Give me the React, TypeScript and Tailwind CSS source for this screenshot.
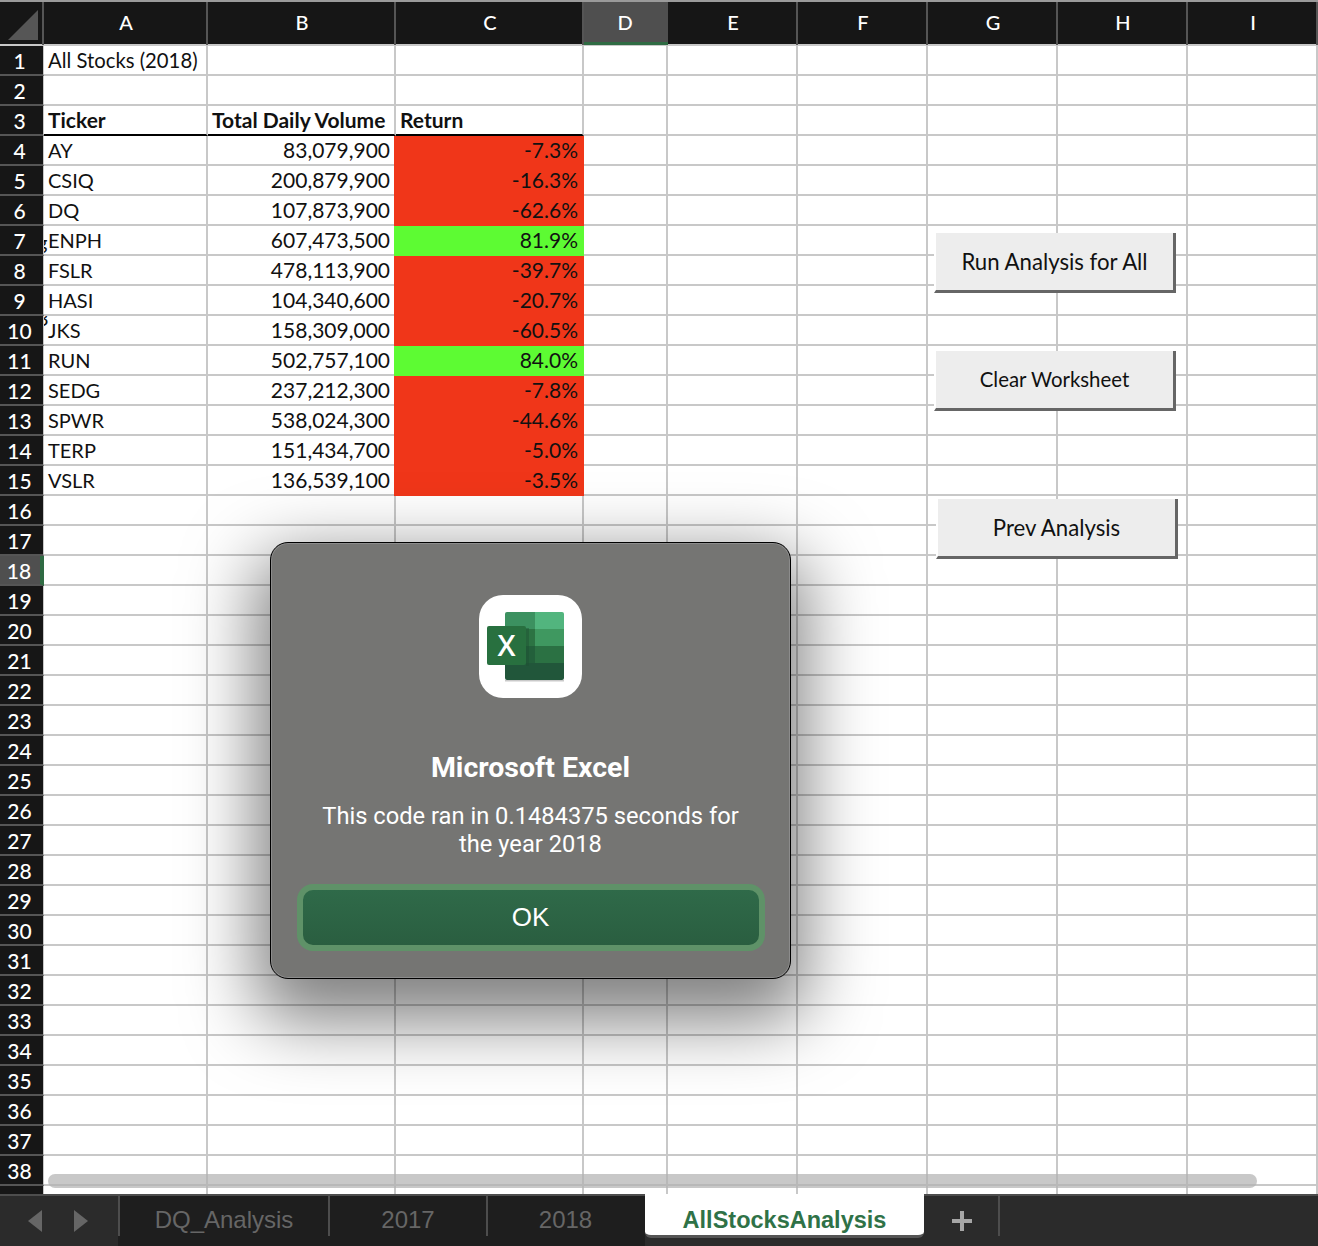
import React from 'react';

const columns = ['A', 'B', 'C', 'D', 'E', 'F', 'G', 'H', 'I'];

const stocks = [
  { ticker: 'AY', volume: '83,079,900', ret: '-7.3%' },
  { ticker: 'CSIQ', volume: '200,879,900', ret: '-16.3%' },
  { ticker: 'DQ', volume: '107,873,900', ret: '-62.6%' },
  { ticker: 'ENPH', volume: '607,473,500', ret: '81.9%', spill: 'g' },
  { ticker: 'FSLR', volume: '478,113,900', ret: '-39.7%' },
  { ticker: 'HASI', volume: '104,340,600', ret: '-20.7%' },
  { ticker: 'JKS', volume: '158,309,000', ret: '-60.5%', spill: '3' },
  { ticker: 'RUN', volume: '502,757,100', ret: '84.0%' },
  { ticker: 'SEDG', volume: '237,212,300', ret: '-7.8%' },
  { ticker: 'SPWR', volume: '538,024,300', ret: '-44.6%' },
  { ticker: 'TERP', volume: '151,434,700', ret: '-5.0%' },
  { ticker: 'VSLR', volume: '136,539,100', ret: '-3.5%' },
];

const gridCols = 'grid grid-cols-[44px_164px_188px_188px_84px_130px_130px_130px_130px_130px]';
const cellLine = 'border-r-2 border-b-2 border-[#c8c8c8] h-[30px] min-w-0 leading-[28px] whitespace-nowrap';

const Cell = ({ className = '', children }: { className?: string; children?: React.ReactNode }) => (
  <div className={`${cellLine} ${className}`}>{children}</div>
);

const RowHeader = ({ n }: { n: number }) => (
  <div
    className={
      n === 18
        ? 'h-[30px] bg-[#4f4f4f] border-r-4 border-r-[#2f6b43] border-b-2 border-b-[#555555] text-center pr-[2px] text-white text-[21px] font-medium leading-[29px]'
        : 'h-[30px] bg-[#161616] border-r border-r-[#c8c8c8] border-b-2 border-b-[#555555] text-center pr-[4px] text-white text-[21px] font-medium leading-[29px]'
    }
  >
    {n}
  </div>
);

const EmptyCells = ({ count }: { count: number }) => (
  <>
    {Array.from({ length: count }).map((_, i) => (
      <Cell key={i} />
    ))}
  </>
);

const SheetRow = ({ n }: { n: number }) => {
  let cells: React.ReactNode = <EmptyCells count={9} />;

  if (n === 1) {
    cells = (
      <>
        <Cell className="pl-1 text-[20.3px]">All Stocks (2018)</Cell>
        <EmptyCells count={8} />
      </>
    );
  } else if (n === 3) {
    cells = (
      <>
        <Cell className="pl-1 font-bold border-b-black">Ticker</Cell>
        <Cell className="pl-1 font-bold border-b-black">Total Daily Volume</Cell>
        <Cell className="pl-1 font-bold border-b-black">Return</Cell>
        <EmptyCells count={6} />
      </>
    );
  } else if (n >= 4 && n <= 15) {
    const s = stocks[n - 4];
    const up = !s.ret.startsWith('-');
    cells = (
      <>
        <Cell className="relative overflow-hidden pl-1 text-[20px]">
          {s.spill && (
            <span className={s.spill === 'g' ? 'absolute -left-[7px] top-[2px]' : 'absolute -left-[7px] -top-[12px]'}>{s.spill}</span>
          )}
          {s.ticker}
        </Cell>
        <Cell className="text-right pr-1">{s.volume}</Cell>
        <div
          className={`-ml-0.5 h-[30px] text-right pr-[6px] leading-[28px] ${up ? 'bg-[#5dfb33]' : 'bg-[#f03619]'}`}
        >
          {s.ret}
        </div>
        <EmptyCells count={6} />
      </>
    );
  }

  return (
    <div className={`${gridCols} text-[21px] text-[#111111]`}>
      <RowHeader n={n} />
      {cells}
    </div>
  );
};

const MacroButton = ({ label, className }: { label: string; className: string }) => (
  <div
    className={`absolute w-[242px] h-[60px] bg-[#ededed] border-l-2 border-l-white border-r-[3px] border-r-[#666666] border-b-[3px] border-b-[#666666] flex items-center justify-center text-[#111111] ${className}`}
  >
    {label}
  </div>
);

const ExcelIcon = () => (
  <svg width="103" height="103" viewBox="0 0 103 103">
    <defs>
      <clipPath id="sheet">
        <rect x="26" y="17" width="59" height="68" rx="2" />
      </clipPath>
    </defs>
    <rect x="26" y="85" width="59" height="1.5" fill="#c9c9c9" />
    <g clipPath="url(#sheet)">
      <rect x="26" y="17" width="30" height="17" fill="#3c9160" />
      <rect x="56" y="17" width="29" height="17" fill="#52b57e" />
      <rect x="26" y="34" width="30" height="17" fill="#2c7343" />
      <rect x="56" y="34" width="29" height="17" fill="#3f9860" />
      <rect x="26" y="51" width="30" height="17" fill="#23603b" />
      <rect x="56" y="51" width="29" height="17" fill="#2b7143" />
      <rect x="26" y="68" width="59" height="17" fill="#21563a" />
      <rect x="47" y="33" width="3" height="38" fill="#1c4f32" opacity="0.45" />
    </g>
    <rect x="8" y="31" width="39" height="39" rx="2" fill="#28703f" />
    <text x="27.5" y="60.5" textAnchor="middle" fill="#ffffff" fontSize="29" fontWeight="600" fontFamily="'Open Sans', sans-serif">
      X
    </text>
  </svg>
);

const Dialog = () => (
  <div className="absolute left-[270px] top-[542px] w-[521px] h-[437px] rounded-[18px] bg-[#757573] border border-black shadow-[inset_0_0_0_1px_#8c8c8c,0_28px_70px_14px_rgba(0,0,0,0.5)] flex flex-col items-center pt-[52px] text-white font-['Roboto',sans-serif]">
    <div className="w-[103px] h-[103px] rounded-[24px] bg-white">
      <ExcelIcon />
    </div>
    <div className="mt-[52px] text-[28.5px] font-bold leading-[36px]">Microsoft Excel</div>
    <div className="mt-[16px] w-[440px] text-center text-[23.7px] leading-[28px]">
      This code ran in 0.1484375 seconds for the year 2018
    </div>
    <button className="mt-[26px] w-[468px] h-[67px] rounded-[16px] border-[6px] border-[#5f9268] bg-gradient-to-b from-[#2f6a49] to-[#2a5e40] text-[26px] text-white font-['Liberation_Sans',sans-serif]">
      OK
    </button>
  </div>
);

const TabBar = () => (
  <div className="relative h-[52px] shrink-0 flex bg-[#2b2b2b] border-t-2 border-[#4d4d4d] font-['Liberation_Sans',sans-serif] text-[24px] text-[#666666]">
    <div className="w-[118px] flex items-center gap-[32px] pl-[28px] pb-[1px]">
      <svg width="14" height="22" viewBox="0 0 14 22">
        <path d="M14 0V22L0 11Z" fill="#666666" />
      </svg>
      <svg width="14" height="22" viewBox="0 0 14 22">
        <path d="M0 0V22L14 11Z" fill="#666666" />
      </svg>
    </div>
    <div className="w-[527px] flex bg-[#1e1e1e]">
      <div className="w-[210px] h-[40px] border-l-2 border-[#4d4d4d] flex items-center justify-center pt-[8px]">DQ_Analysis</div>
      <div className="w-[158px] h-[40px] border-l-2 border-[#4d4d4d] flex items-center justify-center pt-[8px]">2017</div>
      <div className="w-[159px] h-[40px] border-l-2 border-[#4d4d4d] flex items-center justify-center pt-[8px] pr-[2px]">2018</div>
    </div>
    <div className="w-[279px] h-[44px] -mt-0.5 bg-white border-b-[3px] border-[#555555] rounded-b-[6px] flex items-center justify-center pt-[12px] text-[23.5px] font-bold text-[#2f7247]">
      AllStocksAnalysis
    </div>
    <div className="w-[76px] h-[40px] border-r-2 border-[#4d4d4d] flex items-center justify-center pt-[10px] pl-[2px]">
      <svg width="20" height="20" viewBox="0 0 20 20">
        <path d="M8 0h4v8h8v4h-8v8H8v-8H0V8h8Z" fill="#a6a6a6" />
      </svg>
    </div>
  </div>
);

export default function App() {
  return (
    <div className="relative w-[1318px] h-[1246px] overflow-hidden flex flex-col bg-white font-['Lato',sans-serif]">
      {/* column headers */}
      <div className={`${gridCols} h-[46px] shrink-0 bg-[#161616] border-t-2 border-t-[#9a9a9a] border-b-2 border-b-[#c8c8c8] text-white text-[20px] font-medium`}>
        <div className="border-r-2 border-[#555555] pt-[8px] pl-[8px]">
          <svg width="30" height="30" viewBox="0 0 30 30" className="block">
            <path d="M30 0V30H0Z" fill="#565656" />
          </svg>
        </div>
        {columns.map(c => (
          <div
            key={c}
            className={
              c === 'D'
                ? 'bg-[#4f4f4f] border-b-[3px] border-[#2f6b43] text-center pr-[2px] leading-[40px]'
                : 'border-r-2 border-[#555555] text-center pl-0.5 leading-[41px]'
            }
          >
            {c}
          </div>
        ))}
      </div>

      {/* sheet */}
      <div className="flex-1 min-h-0 overflow-hidden">
        {Array.from({ length: 39 }).map((_, i) => (
          <SheetRow key={i} n={i + 1} />
        ))}
      </div>

      <TabBar />

      <MacroButton label="Run Analysis for All" className="left-[934px] top-[233px] text-[22.2px]" />
      <MacroButton label="Clear Worksheet" className="left-[934px] top-[351px] text-[20.4px]" />
      <MacroButton label="Prev Analysis" className="left-[936px] top-[499px] text-[22.2px]" />

      <Dialog />

      {/* horizontal scroll thumb */}
      <div className="absolute left-[48px] top-[1174px] w-[1209px] h-[14px] rounded-full bg-[#b0b0b0]/70" />
    </div>
  );
}
